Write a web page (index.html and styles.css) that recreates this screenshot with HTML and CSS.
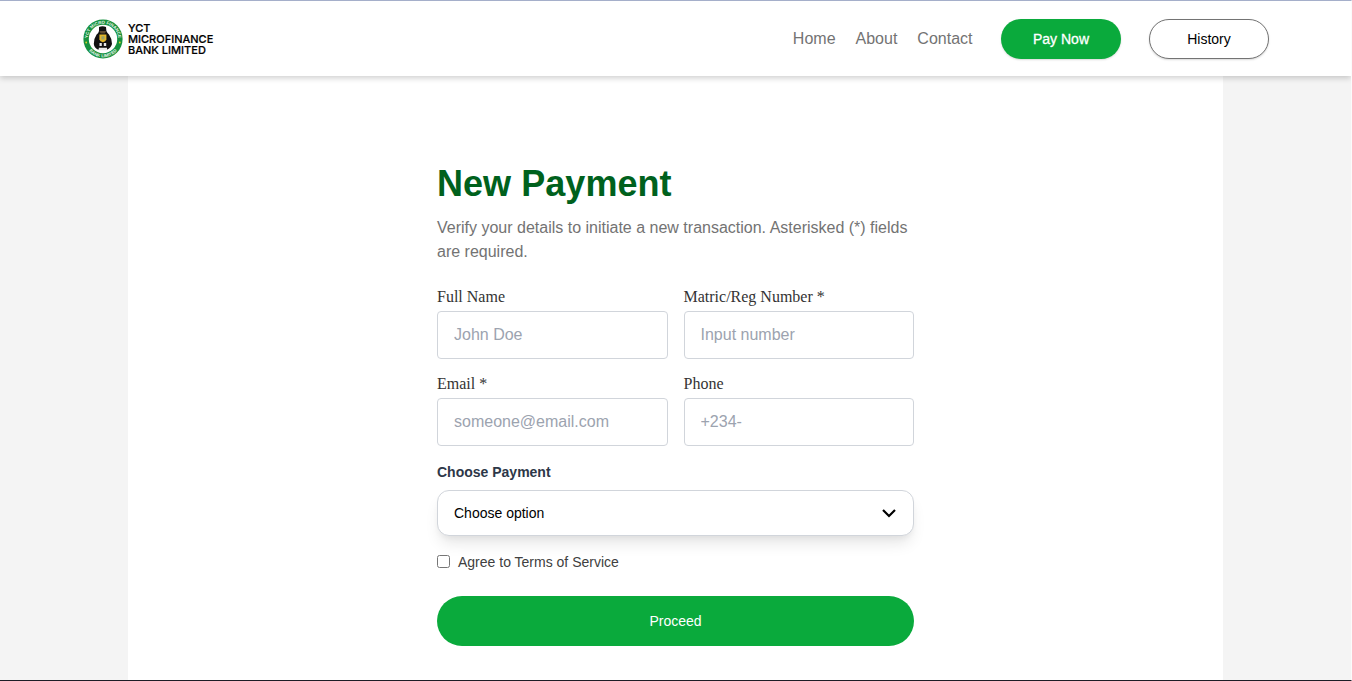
FILE: index.html
```
<!DOCTYPE html>
<html lang="en">
<head>
  <meta charset="UTF-8">
  <meta name="viewport" content="width=device-width, initial-scale=1.0">
  <title>YCT Microfinance Bank Limited</title>
  <link rel="stylesheet" href="styles.css">
</head>
<body>
  <header class="header">
    <a class="brand" href="#">
      <svg class="brand-logo" viewBox="0 0 40 40" width="40" height="40">
        <defs>
          <path id="arcTop" d="M5 22.5 A15.2 15.2 0 1 1 35 22.5"/>
          <path id="arcBottom" d="M3.4 27.5 A18.2 18.2 0 0 0 36.6 27.5"/>
        </defs>
        <circle cx="20" cy="20" r="19.6" fill="#17913f"/>
        <circle cx="20" cy="20" r="14.2" fill="#fff"/>
        <text class="logo-text"><textPath href="#arcTop" startOffset="50%" text-anchor="middle">YCT MICRO FINANCE</textPath></text>
        <text class="logo-text"><textPath href="#arcBottom" startOffset="50%" text-anchor="middle">BANK LIMITED</textPath></text>
        <circle cx="3.2" cy="23.5" r=".9" fill="#d8d52c"/>
        <circle cx="36.8" cy="23.5" r=".9" fill="#d8d52c"/>
        <path d="M16 8 Q19.5 6.4 23 8 L23.4 12 Q24.4 14 26 15.5 Q29.2 20 29 25 Q28 29 24.4 30.4 H14.8 Q11.2 29 10.8 25 Q10.8 19.5 13.6 15.5 Q15.6 14 16 12 Z" fill="#111"/>
        <path d="M16.5 12 H23 L22 14.5 H17.5 Z" fill="#5b4a32"/>
        <path d="M16.4 15.5 H23.4 V20.5 Q22.8 22.8 19.9 23.3 Q17 22.8 16.4 20.5 Z" fill="#e2b72b"/>
        <path d="M18.4 17.2 H21.5 V20.5 H18.4 Z" fill="#9ba36a"/>
        <path d="M16.5 24 H18.8 V27 H16.5 Z M20.8 24 H23.2 V27 H20.8 Z M15.8 28.8 H24 V31.2 H15.8 Z" fill="#e9e9e9"/>
      </svg>
      <span class="brand-name">YCT<br>MICROFINANCE<br>BANK LIMITED</span>
    </a>
    <nav class="nav">
      <div class="nav-links">
        <a href="#">Home</a>
        <a href="#">About</a>
        <a href="#">Contact</a>
      </div>
      <button type="button" class="btn btn-primary">Pay Now</button>
      <button type="button" class="btn btn-outline">History</button>
    </nav>
  </header>

  <main class="main">
    <form class="payment-form">
      <h1>New Payment</h1>
      <p class="intro">Verify your details to initiate a new transaction. Asterisked (*) fields are required.</p>

      <div class="fields">
        <div class="form-group">
          <label for="fullName">Full Name</label>
          <input type="text" id="fullName" placeholder="John Doe">
        </div>
        <div class="form-group">
          <label for="matric">Matric/Reg Number *</label>
          <input type="text" id="matric" placeholder="Input number">
        </div>
        <div class="form-group">
          <label for="email">Email *</label>
          <input type="email" id="email" placeholder="someone@email.com">
        </div>
        <div class="form-group">
          <label for="phone">Phone</label>
          <input type="tel" id="phone" placeholder="+234-">
        </div>
      </div>

      <div class="select-label">Choose Payment</div>
      <button type="button" class="select">
        <span>Choose option</span>
        <svg viewBox="0 0 16 16" width="16" height="16">
          <path d="M2 5 L8 11 L14 5" fill="none" stroke="#000" stroke-width="2.2"/>
        </svg>
      </button>

      <div class="terms">
        <input type="checkbox" id="terms">
        <label for="terms">Agree to Terms of Service</label>
      </div>

      <button type="submit" class="submit-btn">Proceed</button>
    </form>
  </main>
</body>
</html>
```

FILE: styles.css
```
* {
  box-sizing: border-box;
}

body {
  margin: 0;
  height: 681px;
  display: flex;
  flex-direction: column;
  overflow: hidden;
  border-top: 1px solid #a5afca;
  border-bottom: 1px solid #1d1d26;
  border-right: 1px solid #fbfbfb;
  background: #f4f4f4;
  font-family: "Liberation Sans", Arial, sans-serif;
}

.header {
  position: relative;
  flex: none;
  height: 75px;
  padding: 0 82px 0 83px;
  display: flex;
  align-items: center;
  justify-content: space-between;
  background: #fff;
  box-shadow: 0 2px 6px rgba(0, 0, 0, 0.2);
}

.brand {
  display: flex;
  align-items: center;
  gap: 5px;
  color: #000;
  text-decoration: none;
}

.brand-logo {
  display: block;
}

.logo-text {
  font-size: 4.4px;
  font-weight: 700;
  fill: #e8f5ec;
}

.brand-name {
  padding-top: 1px;
  font-family: Inter, sans-serif;
  font-size: 11px;
  font-weight: 500;
  line-height: 11px;
  -webkit-text-stroke: 0.2px #000;
}

.nav {
  display: flex;
  align-items: center;
  gap: 28px;
}

.nav-links {
  display: flex;
  gap: 20px;
  margin-right: 0.5px;
}

.nav-links a {
  color: #737373;
  font-size: 16px;
  text-decoration: none;
}

button {
  font-family: inherit;
  font-size: 14px;
  cursor: pointer;
}

.btn {
  width: 120px;
  height: 40px;
  padding: 0;
  border: none;
  border-radius: 20px;
  box-shadow: 0 1px 2px rgba(0, 0, 0, 0.15);
}

.btn-primary {
  background: #0aaa3c;
  color: #fff;
  -webkit-text-stroke: 0.3px #fff;
}

.btn-outline {
  background: #fff;
  color: #000;
  border: 1px solid #737373;
}

.main {
  flex: 1;
  width: 1095px;
  margin: 0 auto;
  padding-top: 88px;
  background: #fff;
}

.payment-form {
  width: 477px;
  margin: 0 auto;
}

h1 {
  margin: 0 0 12px;
  color: #00611d;
  font-size: 36px;
  line-height: 40px;
  letter-spacing: 0.05px;
}

.intro {
  margin: 0 0 23px;
  color: #737373;
  font-size: 16px;
  line-height: 24px;
}

.fields {
  display: grid;
  grid-template-columns: 1fr 1fr;
  gap: 15px 16px;
}

.form-group label {
  display: block;
  margin-bottom: 4px;
  color: #333;
  font-family: "Liberation Serif", "Times New Roman", serif;
  font-size: 16px;
  line-height: 20px;
}

.form-group input {
  display: block;
  width: 100%;
  height: 48px;
  padding: 0 16px;
  border: 1px solid #d1d5db;
  border-radius: 4px;
  font-family: inherit;
  font-size: 16px;
}

.form-group input::placeholder {
  color: #9ca3af;
}

.select-label {
  margin: 16px 0 8px;
  color: #2d3748;
  font-size: 14px;
  font-weight: 700;
  line-height: 20px;
}

.select {
  width: 100%;
  height: 46px;
  padding: 0 16px;
  display: flex;
  align-items: center;
  justify-content: space-between;
  border: 1px solid #d1d5db;
  border-radius: 12px;
  background: #fff;
  color: #000;
  box-shadow: 0 10px 15px -3px rgba(0, 0, 0, 0.1), 0 4px 6px -2px rgba(0, 0, 0, 0.05);
}

.terms {
  margin: 16px 0 24px;
  display: flex;
  align-items: center;
  gap: 8px;
  color: #404040;
  font-size: 14px;
  line-height: 20px;
}

.terms input {
  width: 13px;
  height: 13px;
  margin: 0 0 2px;
}

.submit-btn {
  width: 100%;
  height: 50px;
  border: none;
  border-radius: 25px;
  background: #0aaa3c;
  color: #fff;
}
```
